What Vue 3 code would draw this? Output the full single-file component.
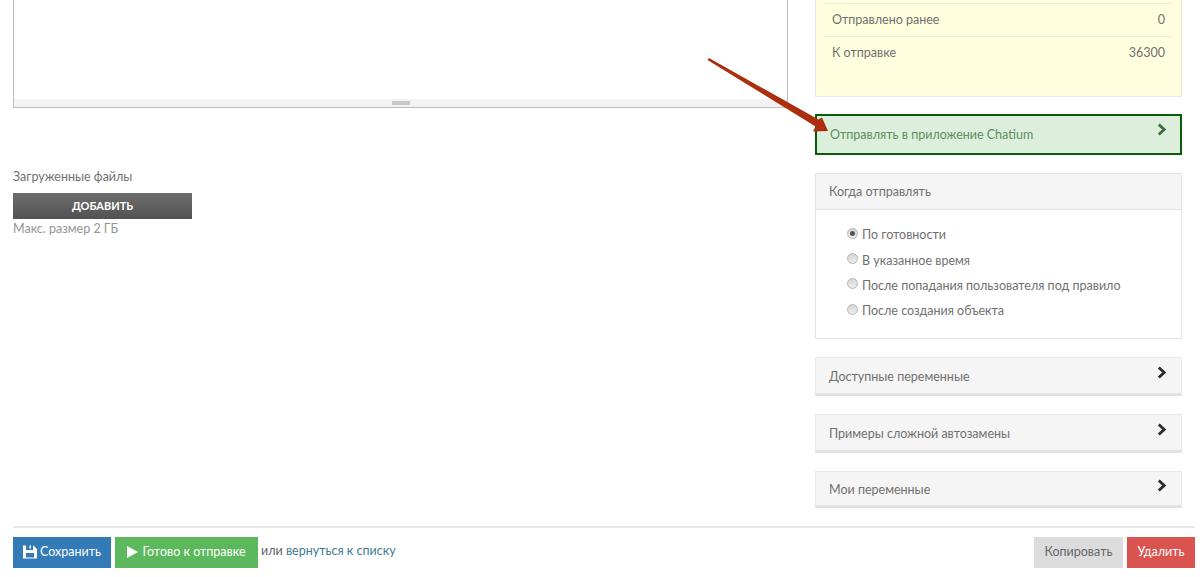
<script setup>
const stats = [
  { label: 'Отправлено ранее', value: '0' },
  { label: 'К отправке', value: '36300' },
]
const radios = [
  { label: 'По готовности', checked: true },
  { label: 'В указанное время', checked: false },
  { label: 'После попадания пользователя под правило', checked: false },
  { label: 'После создания объекта', checked: false },
]
const collapsed = [
  { label: 'Доступные переменные', h: 39 },
  { label: 'Примеры сложной автозамены', h: 39 },
  { label: 'Мои переменные', h: 37 },
]
</script>

<template>
  <div class="page">
    <div class="top">
      <div class="left">
        <div class="editor">
          <div class="resize"><span class="grip"></span></div>
        </div>
        <div class="files-label">Загруженные файлы</div>
        <div class="add-btn">ДОБАВИТЬ</div>
        <div class="hint">Макс. размер 2 ГБ</div>
      </div>
      <div class="right">
        <div class="yellow">
          <div v-for="s in stats" :key="s.label" class="stat">
            <span>{{ s.label }}</span><span>{{ s.value }}</span>
          </div>
        </div>
        <div class="green">
          <span>Отправлять в приложение Chatium</span>
          <svg class="chev" viewBox="0 0 10 13" width="10" height="13"><path d="M1.8 1.5 L7.2 6.5 L1.8 11.5" fill="none" stroke="currentColor" stroke-width="2.8"/></svg>
        </div>
        <div class="panel">
          <div class="panel-head">Когда отправлять</div>
          <div class="panel-body">
            <div v-for="r in radios" :key="r.label" class="radio-row">
              <span class="radio" :class="{ on: r.checked }"></span>
              <span>{{ r.label }}</span>
            </div>
          </div>
        </div>
        <div v-for="c in collapsed" :key="c.label" class="fold" :style="{ height: c.h + 'px' }">
          <span class="fold-label">{{ c.label }}</span>
          <svg class="chev" viewBox="0 0 10 13" width="10" height="13"><path d="M1.8 1.5 L7.2 6.5 L1.8 11.5" fill="none" stroke="currentColor" stroke-width="2.8"/></svg>
        </div>
      </div>
    </div>
    <div class="footer">
      <div class="btn blue">
        <svg viewBox="0 0 14 14" width="14" height="14"><path fill="#fff" fill-rule="evenodd" d="M0 0.5h10.5L14 4V13.5H0zM3 0.5v4.5h7V0.5H8v3H6.5V0.5zM3 8V12.5h8V8z"/></svg>
        <span>Сохранить</span>
      </div>
      <div class="btn greenbtn">
        <svg viewBox="0 0 11 12" width="11" height="12"><path fill="#fff" d="M0 0 L11 6 L0 12z"/></svg>
        <span>Готово к отправке</span>
      </div>
      <span class="or">или <span class="link">вернуться к списку</span></span>
      <div class="spacer"></div>
      <div class="btn grey">Копировать</div>
      <div class="btn red">Удалить</div>
    </div>
    <svg class="arrow" width="140" height="90" viewBox="0 0 140 90">
      <path d="M9 8 L118.5 69.5 L122 67.5 L128 81 L113 81.5 L115.5 76.5 L7.5 10 z" fill="#ac2f0d"/>
    </svg>
  </div>
</template>

<style scoped>
.page {
  position: relative;
  width: 1200px;
  height: 577px;
  overflow: hidden;
  box-sizing: border-box;
  padding: 0 5px 0 13px;
  background: #fff;
  font-family: Lato, "Open Sans", "Liberation Sans", sans-serif;
  font-size: 12.5px;
  color: #707070;
  display: flex;
  flex-direction: column;
}
.top { display: flex; gap: 27px; height: 526px; }
.left { width: 775px; flex: none; }
.editor {
  height: 108px;
  box-sizing: border-box;
  border: 1px solid #bbb;
  border-top: 0;
  display: flex;
  flex-direction: column;
  justify-content: flex-end;
}
.resize {
  height: 8px;
  background: #f3f3f3;
  display: flex;
  justify-content: center;
  align-items: center;
}
.grip { width: 18px; height: 4px; background: #c8c8c8; }
.files-label { margin-top: 60px; line-height: 17px; }
.add-btn {
  margin-top: 8px;
  width: 179px;
  height: 26px;
  background: linear-gradient(#6e6e6e, #515151);
  color: #fff;
  font-size: 11px;
  font-weight: 700;
  line-height: 26px;
  text-align: center;
}
.hint { color: #949494; line-height: 20px; }
.right { width: 367px; flex: none; }
.yellow {
  height: 97px;
  box-sizing: border-box;
  background: #ffffe0;
  border: 1px solid #e8e8e0;
  border-top: 0;
  padding: 3px 9px 0;
}
.stat {
  display: flex;
  justify-content: space-between;
  height: 33px;
  box-sizing: border-box;
  line-height: 31px;
  padding: 0 7px;
  border-top: 1px solid #ebebd6;
}
.green {
  margin-top: 17px;
  height: 41px;
  box-sizing: border-box;
  background: #dcefdc;
  border: 2px solid #0a5c0a;
  padding: 0 13px 1px;
  display: flex;
  justify-content: space-between;
  align-items: center;
  color: #5e8d5e;
}
.green .chev { color: #3c6b3c; margin: -9px 0 0; }
.panel {
  margin-top: 18px;
  height: 166px;
  box-sizing: border-box;
  border: 1px solid #e4e4e4;
}
.panel-head {
  height: 36px;
  line-height: 35px;
  box-sizing: border-box;
  background: #f5f5f5;
  border-bottom: 1px solid #e4e4e4;
  padding: 0 13px;
}
.panel-body { padding: 12px 0 0 31px; }
.radio-row { display: flex; align-items: center; height: 25.4px; gap: 4px; }
.radio {
  width: 11px;
  height: 11px;
  border-radius: 50%;
  box-sizing: border-box;
  border: 1px solid #b5b5b5;
  background: linear-gradient(#d4d4d4, #eee);
  margin-top: -3px;
  position: relative;
}
.radio.on::after {
  content: "";
  position: absolute;
  left: 2px;
  top: 2px;
  width: 5px;
  height: 5px;
  border-radius: 50%;
  background: #555;
}
.fold {
  margin-top: 18px;
  box-sizing: border-box;
  background: #f5f5f5;
  border: 1px solid #e8e8e8;
  border-bottom: 3px solid #e2e2e2;
  padding: 0 13px;
  display: flex;
  justify-content: space-between;
  align-items: center;
}
.fold-label { margin-top: 2px; }
.fold .chev { color: #2b2b2b; margin: -6px 1px 0 0; }
.footer {
  border-top: 2px solid #e8e8e8;
  padding-top: 9px;
  display: flex;
  align-items: flex-start;
  gap: 4px;
}
.btn {
  height: 31px;
  box-sizing: border-box;
  display: flex;
  align-items: center;
  justify-content: center;
  gap: 3px;
  padding-bottom: 2px;
}
.blue { width: 98px; background: #337ab7; color: #fff; }
.greenbtn { width: 143px; background: #5cb85c; color: #fff; gap: 4px; }
.grey { width: 89px; background: #dcdcdc; color: #666; }
.red { width: 68px; background: #d9534f; color: #fff; }
.or { line-height: 27px; margin-left: -1px; color: #5f5f5f; }
.link { color: #3f7a94; }
.spacer { flex: 1; }
.arrow { position: absolute; left: 700px; top: 50px; pointer-events: none; }
</style>
